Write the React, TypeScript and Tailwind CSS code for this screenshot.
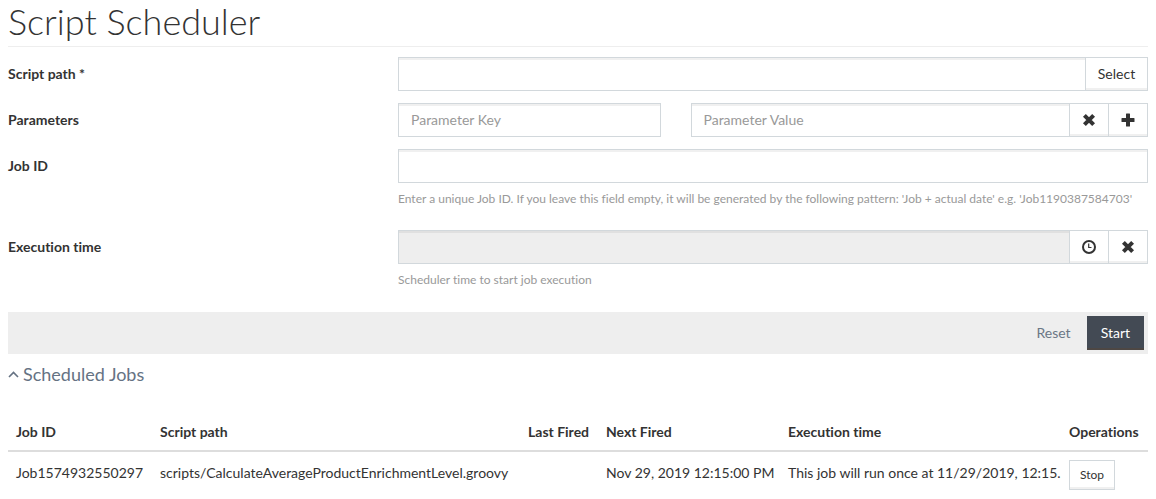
import React from "react";

const field =
  "block h-[34px] w-full min-w-0 flex-1 border border-[#d2d8dc] px-3 pb-0.5 text-sm text-[#333333] placeholder-[#999999] outline-none shadow-[inset_0_2px_0_#f0f0f0]";
const addon =
  "-ml-px flex h-[34px] shrink-0 items-center justify-center border border-[#d2d8dc] bg-white text-sm text-[#333333] shadow-[inset_0_-2px_0_#f0f0f0]";

function TimesIcon() {
  return (
    <svg viewBox="0 0 14 14" className="size-[14px]" fill="none" stroke="currentColor" strokeWidth="4" aria-hidden="true">
      <path d="M2.4 2.4 11.6 11.6M11.6 2.4 2.4 11.6" />
    </svg>
  );
}

function PlusIcon() {
  return (
    <svg viewBox="0 0 14 14" className="size-[14px]" fill="currentColor" aria-hidden="true">
      <path d="M5.5 0.5h3q.5 0 .5.5v4h4q.5 0 .5.5v3q0 .5-.5.5h-4v4q0 .5-.5.5h-3q-.5 0-.5-.5v-4h-4q-.5 0-.5-.5v-3q0-.5.5-.5h4v-4q0-.5.5-.5z" />
    </svg>
  );
}

function ClockIcon() {
  return (
    <svg viewBox="0 0 14 14" className="size-[14px]" fill="none" stroke="currentColor" aria-hidden="true">
      <circle cx="7" cy="7" r="6" strokeWidth="2" />
      <path d="M6.7 3.6v3.9h2.8" strokeWidth="1.2" />
    </svg>
  );
}

function Row({ label, id, help, children }: { label: string; id: string; help?: string; children: React.ReactNode }) {
  return (
    <div className="grid grid-cols-12 gap-x-[30px]">
      <label htmlFor={id} className="col-span-4 pt-[7px] text-sm leading-5 font-bold">
        {label}
      </label>
      <div className="col-span-8">
        {children}
        {help && <p className="mt-[7px] mb-[10px] text-xs leading-[18px] text-[#999999]">{help}</p>}
      </div>
    </div>
  );
}

const th = "py-2 pl-2 text-left font-bold whitespace-nowrap";
const td = "pt-[11px] pb-2 pl-2 align-top whitespace-nowrap";

export default function App() {
  return (
    <main className="px-2 font-['Lato',sans-serif] text-sm leading-5 text-[#333333] [font-variant-ligatures:no-common-ligatures]">
      <h1 className="border-b border-[#eeeeee] pb-1 text-[36px] leading-[42px] font-light">Script Scheduler</h1>
      <form className="pt-[10px]" onSubmit={(e) => e.preventDefault()}>
        <div className="flex flex-col gap-3">
          <Row label="Script path *" id="path">
            <div className="flex">
              <input id="path" className={field} />
              <button type="button" className={`${addon} w-[63px]`}>Select</button>
            </div>
          </Row>
          <Row label="Parameters" id="key">
            <div className="grid grid-cols-8 gap-x-[30px]">
              <div className="col-span-3">
                <input id="key" placeholder="Parameter Key" className={field} />
              </div>
              <div className="col-span-5 flex">
                <input aria-label="Parameter Value" placeholder="Parameter Value" className={field} />
                <button type="button" aria-label="Remove parameter" className={`${addon} w-10`}>
                  <TimesIcon />
                </button>
                <button type="button" aria-label="Add parameter" className={`${addon} w-10`}>
                  <PlusIcon />
                </button>
              </div>
            </div>
          </Row>
          <Row
            label="Job ID"
            id="job"
            help="Enter a unique Job ID. If you leave this field empty, it will be generated by the following pattern: 'Job + actual date' e.g. 'Job1190387584703'"
          >
            <input id="job" className={field} />
          </Row>
          <Row label="Execution time" id="time" help="Scheduler time to start job execution">
            <div className="flex">
              <input
                id="time"
                readOnly
                className="block h-[34px] w-full min-w-0 flex-1 border border-[#d2d8dc] bg-[#eeeeee] px-3 text-sm shadow-[inset_0_2px_0_#e0e0e0] outline-none"
              />
              <button type="button" aria-label="Choose time" className={`${addon} w-10`}>
                <ClockIcon />
              </button>
              <button type="button" aria-label="Clear time" className={`${addon} w-10`}>
                <TimesIcon />
              </button>
            </div>
          </Row>
        </div>
        <div className="mt-[13px] flex justify-end gap-1 bg-[#eeeeee] p-1">
          <button type="reset" className="h-[34px] px-3 text-[#6b7785]">Reset</button>
          <button type="submit" className="h-[34px] bg-[#434a54] px-3.5 text-white shadow-[inset_0_-2px_0_#4d4744]">
            Start
          </button>
        </div>
      </form>
      <h2 className="pt-[9px] text-lg leading-[22px] text-[#657283]">
        <button type="button" aria-expanded="true" className="flex items-center gap-1">
          <svg viewBox="0 0 11 7" className="h-[7px] w-[11px]" fill="none" stroke="currentColor" strokeWidth="1.6" aria-hidden="true">
            <path d="M1 6 5.5 1.5 10 6" />
          </svg>
          Scheduled Jobs
        </button>
      </h2>
      <table className="mt-[29px] w-full table-fixed border-collapse">
        <thead>
          <tr className="border-b-2 border-[#dddddd]">
            <th className={`${th} w-[144px]`}>Job ID</th>
            <th className={`${th} w-[368px]`}>Script path</th>
            <th className={`${th} w-[78px]`}>Last Fired</th>
            <th className={`${th} w-[182px]`}>Next Fired</th>
            <th className={`${th} w-[281px]`}>Execution time</th>
            <th className={th}>Operations</th>
          </tr>
        </thead>
        <tbody>
          <tr>
            <td className={td}>Job1574932550297</td>
            <td className={td}>scripts/CalculateAverageProductEnrichmentLevel.groovy</td>
            <td className={td}></td>
            <td className={td}>Nov 29, 2019 12:15:00 PM</td>
            <td className={td}>This job will run once at 11/29/2019, 12:15.</td>
            <td className="py-2 pl-2 align-top">
              <button type="button" className="block h-[30px] border border-[#d2d8dc] bg-white px-[10px] text-xs shadow-[inset_0_-2px_0_#f0f0f0]">
                Stop
              </button>
            </td>
          </tr>
        </tbody>
      </table>
    </main>
  );
}
